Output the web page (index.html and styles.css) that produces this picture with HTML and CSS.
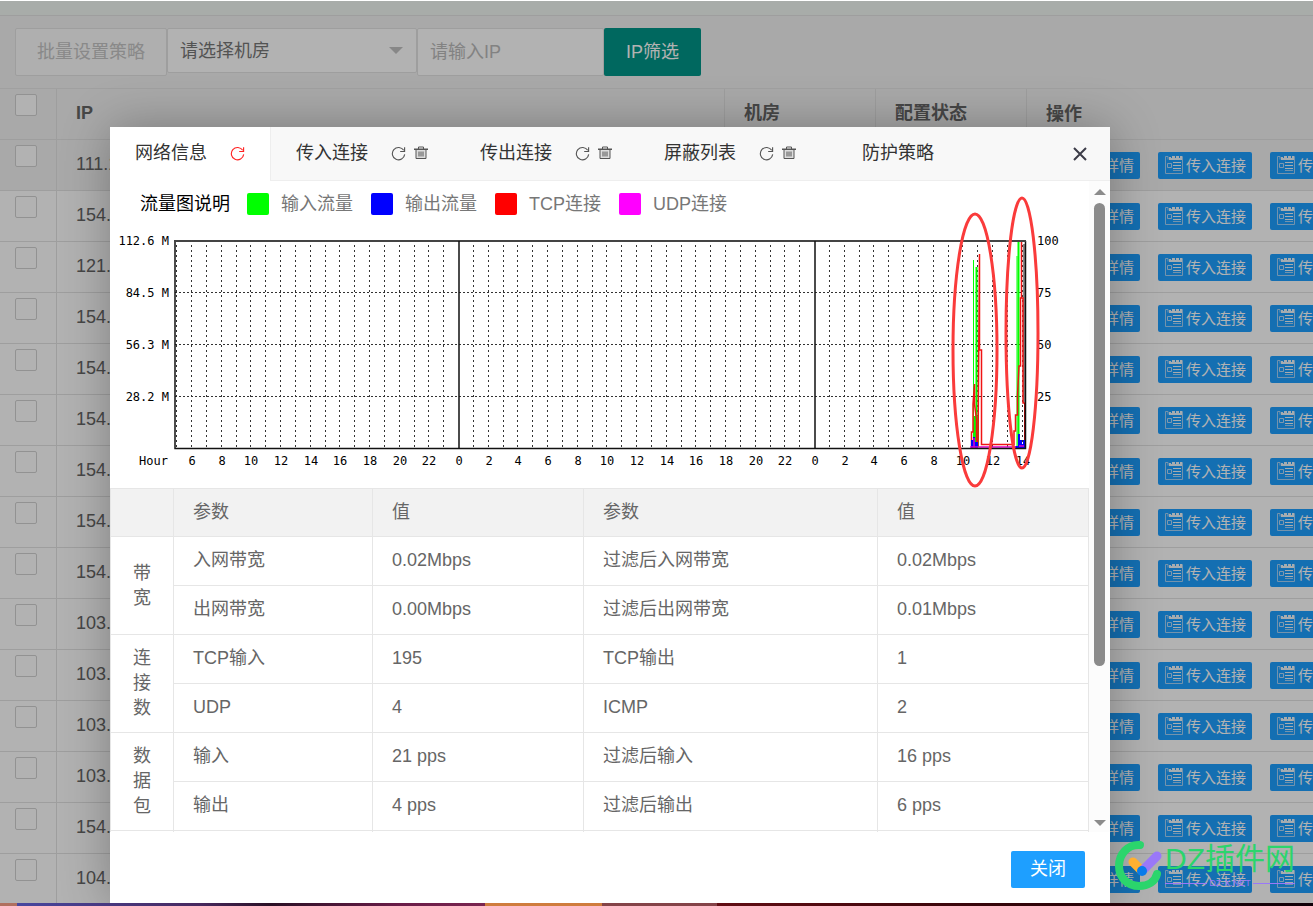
FILE: index.html
```html
<!DOCTYPE html>
<html lang="zh-CN">
<head>
<meta charset="utf-8">
<title>网络信息</title>
<link rel="stylesheet" href="styles.css">
</head>
<body>
<svg class="defs" aria-hidden="true">
  <symbol id="refresh" viewBox="0 0 16 16"><path d="M13.6 4.6A6.6 6.6 0 1 0 14.6 9" fill="none" stroke="currentColor" stroke-width="1.2"/><path d="M14.5 1.2v4.6H9.8" fill="none" stroke="currentColor" stroke-width="1.2"/></symbol>
  <symbol id="trash" viewBox="0 0 14 14"><path d="M0 2.500h14v1.500H0z" fill="currentColor"/><path d="M4.500 3V1h5v2" fill="none" stroke="currentColor"/><path d="M2 4v8.500h10V4" fill="#ddd" stroke="currentColor"/><path d="M5 5.500v5M7 5.500v5M9 5.500v5" stroke="currentColor"/></symbol>
  <symbol id="note" viewBox="0 0 20 20"><path d="M4 4.500V1.500H1.500v17h17v-17h-1" fill="none" stroke="#a5d3f8"/><path d="M5 5V2h2v1h1V1h3v2h1V1h3v2h1V1h2v4z" fill="#eef6fd"/><path d="M3.500 8.500h4v4h-4z" fill="none" stroke="#b5dafa"/><path d="M9 7.500h8M9 10.500h8M9 13.500h8" stroke="#eef6fd"/><path d="M9 15.500h8" stroke="#a5d3f8"/></symbol>
</svg>

<div class="page">
  <div class="topline"></div>
  <div class="topbar"></div>
  <form class="toolbar">
    <button type="button" class="batch" disabled>批量设置策略</button>
    <div class="select-wrap"><select aria-label="机房"><option>请选择机房</option></select></div>
    <input class="ip-input" type="text" placeholder="请输入IP" aria-label="IP">
    <button type="button" class="filter">IP筛选</button>
  </form>
  <table class="hosts">
    <colgroup><col class="c-check"><col><col class="c-mid"><col class="c-mid"><col class="c-ops"></colgroup>
    <thead><tr><th class="check"><input type="checkbox" aria-label="全选"></th><th>IP</th><th>机房</th><th>配置状态</th><th>操作</th></tr></thead>
    <tbody id="hosts"></tbody>
  </table>

  <div class="shade">
    <section class="dialog" role="dialog" aria-label="网络信息">
      <header class="tabs">
        <div class="tab active"><button class="tab-name">网络信息</button><button class="icon" aria-label="刷新"><svg><use href="#refresh"/></svg></button></div>
        <div class="tab"><button class="tab-name">传入连接</button><button class="icon" aria-label="刷新"><svg><use href="#refresh"/></svg></button><button class="icon trash" aria-label="清空"><svg><use href="#trash"/></svg></button></div>
        <div class="tab"><button class="tab-name">传出连接</button><button class="icon" aria-label="刷新"><svg><use href="#refresh"/></svg></button><button class="icon trash" aria-label="清空"><svg><use href="#trash"/></svg></button></div>
        <div class="tab"><button class="tab-name">屏蔽列表</button><button class="icon" aria-label="刷新"><svg><use href="#refresh"/></svg></button><button class="icon trash" aria-label="清空"><svg><use href="#trash"/></svg></button></div>
        <div class="tab wide"><button class="tab-name">防护策略</button></div>
        <button class="close" aria-label="关闭窗口"><svg viewBox="0 0 16 16"><path d="M2 2l12 12M14 2L2 14" stroke="#3c3c48" stroke-width="2"/></svg></button>
      </header>
      <div class="body">
        <div class="content">
          <div class="legend">
            <strong>流量图说明</strong>
            <span class="key"><i class="swatch in"></i>输入流量</span>
            <span class="key"><i class="swatch out"></i>输出流量</span>
            <span class="key"><i class="swatch tcp"></i>TCP连接</span>
            <span class="key"><i class="swatch udp"></i>UDP连接</span>
          </div>
          <svg class="chart" viewBox="110 226 979 262" role="img" aria-label="流量图">
            <g id="grid" stroke="#333"></g>
            <g fill="none">
              <path d="M973.500 260V446M1017 256V446" stroke="#0f0"/>
              <path d="M976.500 267V446M1018.500 241V446" stroke="#0f0" stroke-width="2"/>
              <path d="M974 416H979V447H974z" fill="#0f0"/>
              <path d="M1024 244V403" stroke="#888" stroke-width="2"/>
              <path d="M971.500 446V432H973V404L974.500 384V404L976.500 420V440L978 446L979.500 254V350H981.500V444.500H1014V431H1015.500V415H1017.500V395L1019 366H1020.500V298H1021.500V241V298H1023V403H1025V446" stroke="#f01414" stroke-width="1.500"/>
              <path d="M1025 403V447" stroke="#a00" stroke-width="2"/>
              <path d="M971 448V440H973V437H975V442H978V448zM1015 448V446H1018V434H1020V440H1022V444H1023V440H1025V448z" fill="#00f"/>
              <path d="M970 447H980L1016 447M974 438V448M1019 446H1024" stroke="#d0c" stroke-width="1.500"/>
            </g>
            <g fill="none" stroke="#111">
              <path d="M175 241V448.500H1025.500V241" stroke-width="1.500"/>
              <path d="M174 241H1026" stroke="#444" stroke-width="2"/>
              <path d="M459 241V448M815 241V448" stroke-width="1.500"/>
            </g>
            <g id="labels" class="chart-text"></g>
            <g fill="none" stroke="#fa3b3b" stroke-width="3">
              <ellipse cx="975" cy="350" rx="22" ry="136"/>
              <ellipse cx="1022" cy="333" rx="16" ry="135"/>
            </g>
          </svg>
          <table class="stats">
            <colgroup><col class="s-group"><col class="s-a"><col class="s-b"><col class="s-c"><col></colgroup>
            <thead><tr><th></th><th>参数</th><th>值</th><th>参数</th><th>值</th></tr></thead>
            <tbody>
              <tr><th rowspan="2" class="group">带宽</th><td>入网带宽</td><td>0.02Mbps</td><td>过滤后入网带宽</td><td>0.02Mbps</td></tr>
              <tr><td>出网带宽</td><td>0.00Mbps</td><td>过滤后出网带宽</td><td>0.01Mbps</td></tr>
              <tr><th rowspan="2" class="group">连接数</th><td>TCP输入</td><td>195</td><td>TCP输出</td><td>1</td></tr>
              <tr><td>UDP</td><td>4</td><td>ICMP</td><td>2</td></tr>
              <tr><th rowspan="2" class="group">数据包</th><td>输入</td><td>21 pps</td><td>过滤后输入</td><td>16 pps</td></tr>
              <tr><td>输出</td><td>4 pps</td><td>过滤后输出</td><td>6 pps</td></tr>
              <tr><th></th><td></td><td></td><td></td><td></td></tr>
            </tbody>
          </table>
        </div>
        <div class="scrollbar" aria-hidden="true"><i class="arrow up"></i><div class="track"><div class="thumb"></div></div><i class="arrow down"></i></div>
      </div>
      <footer class="foot"><button class="confirm">关闭</button></footer>
    </section>
  </div>

  <div class="brand">
    <svg class="brand-mark" viewBox="0 0 48 52">
      <path d="M25 5C13 4 4 14 4 26C4 38 13 46 24 46C33 46 40 42 42 34" fill="none" stroke="#2bd56c" stroke-width="8" stroke-linecap="round"/>
      <path d="M18 22L26 30" stroke="#ffb030" stroke-width="9" stroke-linecap="round"/>
      <path d="M42 16L29 29" stroke="#9a78f8" stroke-width="9" stroke-linecap="round"/>
      <circle cx="27" cy="31" r="5" fill="#087bea"/>
    </svg>
    <div class="brand-words">
      <div class="brand-name">DZ插件网</div>
      <div class="brand-sub">DZ-X.NET</div>
    </div>
  </div>
</div>
<div class="wallpaper"></div>
<script src="script.js"></script>
</body>
</html>
```
FILE: styles.css
```css
* { box-sizing: border-box; }
body {
  margin: 0;
  height: 100vh;
  display: flex;
  flex-direction: column;
  overflow: hidden;
  background: #fff;
  color: #666;
  font: 18px/26px "Liberation Sans", "Noto Sans CJK SC", sans-serif;
}
button, input, select { font: inherit; color: inherit; border: 0; background: none; padding: 0; margin: 0; }
.defs { display: none; }
.page { position: relative; flex: 1; min-height: 0; overflow: hidden; background: #f2f2f2; }
.wallpaper {
  height: 3px;
  background: linear-gradient(90deg, #b0705f 0 17px, #4747a0 17px, #47285e 200px, #2a1025 270px, #6a1c48 400px, #7a2550 485px, #cf7c3d 485px 602px, #844348 602px 717px, #620d14 717px, #34050a 1000px, #100008);
}

.topline { height: 1px; background: #fff; }
.topbar { height: 15px; background: #f1f6f3; border-bottom: 1px solid #e2e2e2; }
.toolbar { display: flex; align-items: flex-start; padding: 12px 15px; }
.batch { width: 152px; height: 48px; border: 1px solid #e2e2e2; border-radius: 2px; background: #fbfbfb; color: #c4c4c4; }
.select-wrap { position: relative; width: 250px; }
.select-wrap select { width: 100%; height: 45px; padding: 0 12px; appearance: none; border: 1px solid #e2e2e2; border-radius: 2px; background: #fff; color: #777; }
.select-wrap::after { content: ""; position: absolute; right: 14px; top: 19px; border: 7px solid transparent; border-top-color: #c2c2c2; border-bottom: 0; pointer-events: none; }
.ip-input { width: 187px; height: 48px; padding: 0 12px; border: 1px solid #e2e2e2; border-radius: 2px; background: #fff; }
.ip-input::placeholder { color: #bbb; opacity: 1; }
.filter { width: 97px; height: 48px; border-radius: 2px; background: #009688; color: #fff; }

.hosts { width: 100%; table-layout: fixed; border-collapse: separate; border-spacing: 0; border-top: 1px solid #e6e6e6; background: #fff; }
.c-check { width: 57px; }
.c-mid { width: 151px; }
.c-ops { width: 286px; }
.hosts th, .hosts td { height: 51px; padding: 0 19px 2px; border-right: 1px solid #e2e2e2; border-bottom: 1px solid #e2e2e2; text-align: left; white-space: nowrap; overflow: hidden; }
.hosts th, .hosts .hover td { background: #f2f2f2; }
.hosts th:last-child, .hosts td:last-child { padding-bottom: 0; padding-right: 0; border-right: 0; }
.hosts .check { padding: 5px 15px; vertical-align: top; line-height: 1; }
.hosts input { display: block; width: 22px; height: 22px; appearance: none; border: 1px solid #d2d2d2; border-radius: 2px; background: #fff; }
.ops { display: flex; gap: 18px; }
.ops button { display: flex; align-items: center; flex: none; gap: 2px; height: 27px; padding: 0 6px; border-radius: 2px; background: #1e9fff; color: #fff; font-size: 15px; line-height: 27px; }
.ops svg { width: 20px; height: 20px; }

.shade { position: absolute; inset: 1px 0 0; display: flex; padding: 126px 203px 0 110px; background: rgba(0, 0, 0, .3); }
.dialog { flex: 1; min-width: 0; display: flex; flex-direction: column; background: #fff; border-radius: 2px 2px 0 0; box-shadow: 1px 1px 50px rgba(0, 0, 0, .3); }
.tabs { display: flex; flex: none; height: 54px; background: #f8f8f8; border-bottom: 1px solid #eee; color: #333; }
.tab { display: flex; align-items: center; padding: 0 26px 2px 25px; height: 54px; }
.tab.active { width: 161px; background: #fff; border-right: 1px solid #eee; }
.tab.wide { padding-left: 39px; }
.tab-name { margin-right: 23px; white-space: nowrap; }
.icon { display: flex; color: #555; }
.icon svg { width: 15px; height: 15px; }
.icon.trash { margin: 0 1px 0 8px; }
.icon.trash svg { width: 14px; height: 14px; }
.active .icon { color: #f22; }
.close { display: flex; align-items: center; margin-left: auto; padding: 0 22px; }
.close svg { width: 16px; height: 16px; }

.body { flex: 1; min-height: 0; display: flex; overflow: hidden; }
.content { flex: 1; min-width: 0; }
.legend { display: flex; align-items: center; gap: 17px; height: 45px; padding-left: 30px; color: #777; }
.legend strong { font-weight: 400; color: #000; }
.key { display: flex; align-items: center; gap: 12px; min-width: 107px; white-space: nowrap; }
.swatch { width: 22px; height: 22px; border-radius: 2px; }
.in { background: #0f0; }
.out { background: #00f; }
.tcp { background: #f00; }
.udp { background: #f0f; }
.chart { display: block; width: 100%; overflow: visible; position: relative; }
.chart-text { font: 12px "DejaVu Sans Mono", monospace; fill: #000; }

.stats { width: 100%; table-layout: fixed; border-collapse: collapse; }
.s-group { width: 63px; }
.s-a { width: 199px; }
.s-b { width: 211px; }
.s-c { width: 294px; }
.stats th, .stats td { height: 49px; padding: 0 18px 2px 19px; border: 1px solid #e6e6e6; text-align: left; font-weight: 400; }
.stats thead th { height: 48px; background: #f2f2f2; }
.stats .group { padding: 0 20px; line-height: 25px; text-align: center; word-break: break-all; }

.scrollbar { flex: none; width: 21px; display: flex; flex-direction: column; align-items: center; padding: 8px 0 6px; background: #fcfcfc; }
.arrow { border: 6px solid transparent; }
.up { border-top: 0; border-bottom-color: #8b8b8b; }
.down { border-bottom: 0; border-top-color: #8b8b8b; }
.track { flex: 1; width: 11px; padding: 8px 0; }
.thumb { height: 76%; border-radius: 6px; background: #8b8b8b; }
.foot { flex: none; display: flex; justify-content: flex-end; padding: 19px 25px 15px; }
.confirm { width: 74px; height: 37px; padding-bottom: 2px; border-radius: 2px; background: #1e9fff; color: #fff; }

.brand { position: absolute; right: 18px; bottom: 11px; display: flex; gap: 2px; }
.brand-mark { width: 48px; height: 52px; }
.brand-words { display: flex; flex-direction: column; }
.brand-name { font-size: 30px; line-height: 38px; color: #2bd56c; white-space: nowrap; }
.brand-sub { display: flex; align-items: center; gap: 2px; font-size: 9px; line-height: 10px; color: #9a78f8; }
.brand-sub::before, .brand-sub::after { content: ""; flex: 1; height: 1px; background: #9a78f8; }
```
FILE: script.js
```js
const ips = ["111.1", "154.", "121.", "154.", "154.", "154.", "154.", "154.", "154.", "103.", "103.", "103.", "103.", "154.", "104."];
const actions = ["网络详情", "传入连接", "传出连接"];
const buttons = actions.map(a => `<button type="button"><svg><use href="#note"/></svg>${a}</button>`).join("");
document.getElementById("hosts").innerHTML = ips.map((ip, i) =>
  `<tr class="${i === 0 ? "hover" : ""}"><td class="check"><input type="checkbox" aria-label="${ip}"></td><td>${ip}</td><td></td><td></td><td><div class="ops">${buttons}</div></td></tr>`
).join("");

const left = 175, right = 1025, top0 = 241, bottom = 448;
const hourWidth = 89 / 6, midnight = 459;
let grid = "", labels = "";
for (let h = -19; h <= 38; h++) {
  const x = Math.round(midnight + h * hourWidth);
  if (h % 24 !== 0) grid += `<path d="M${x - 0.5} ${top0 + 4}V${bottom}" stroke-dasharray="2 3"/>`;
  if (h % 2 === 0) labels += `<text x="${x}" y="465" text-anchor="middle">${(h + 24) % 24}</text>`;
}
[293, 345, 397].forEach(y => { grid += `<path d="M${left} ${y - 0.5}H${right}" stroke-dasharray="2 2"/>`; });
["112.6 M", "84.5 M", "56.3 M", "28.2 M"].forEach((t, i) => {
  labels += `<text x="169" y="${245 + i * 52}" text-anchor="end">${t}</text>`;
});
["100", "75", "50", "25"].forEach((t, i) => { labels += `<text x="1037" y="${245 + i * 52}">${t}</text>`; });
labels += `<text x="168" y="465" text-anchor="end">Hour</text>`;
document.getElementById("grid").innerHTML = grid;
document.getElementById("labels").innerHTML = labels;
```
